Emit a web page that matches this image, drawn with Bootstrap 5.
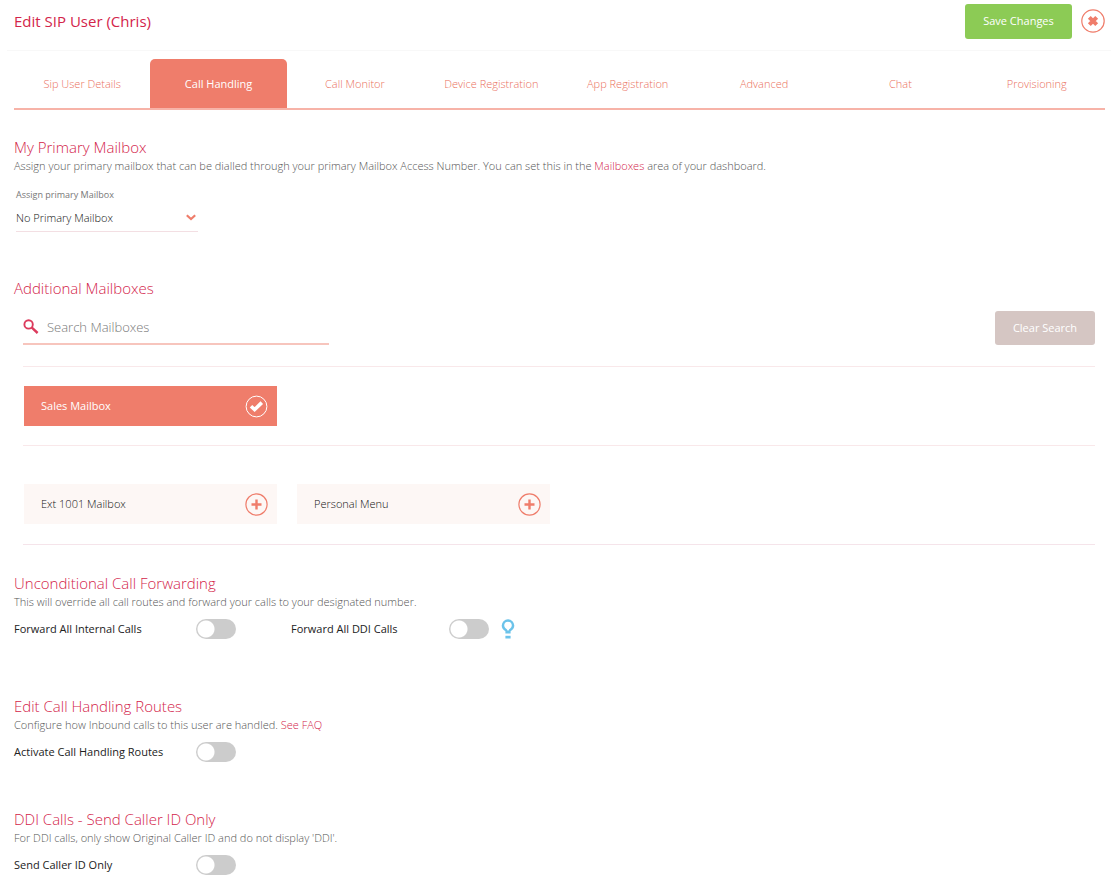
<!DOCTYPE html>
<html lang="en">
<head>
<meta charset="utf-8">
<meta name="viewport" content="width=device-width, initial-scale=1">
<title>Edit SIP User</title>
<link href="https://cdn.jsdelivr.net/npm/bootstrap@5.3.0/dist/css/bootstrap.min.css" rel="stylesheet">
<style>
  :root { --coral: #ef7d6b; --rose: #dc3a5c; }
  body { font-family: "Open Sans", "Liberation Sans", sans-serif; font-size: 11px; line-height: 18px; color: #333; background: #fff; }
  a { color: var(--rose); text-decoration: none; }
  .page-head { height: 51px; margin-left: 7px; padding: 0 6px 8px 7px; border-bottom: 1px solid #f8f8f8; }
  .page-title { font-size: 15px; line-height: 20px; font-weight: 400; color: #d3244a; }
  .head-tools { gap: 9px; }
  .btn { font-size: 11px; line-height: 18px; border: 0; border-radius: 3px; color: #fff; }
  .btn-save { width: 107px; height: 35px; background: #8ccb55; }
  .btn-clear, .btn-clear:disabled { width: 100px; height: 34px; background: #d5c6c3; color: #fff; opacity: 1; }
  .btn-round { width: 24px; height: 24px; padding: 0; background: none; }
  .btn-round svg, .box-tile svg { display: block; }
  .page-main { padding: 8px 6px 20px 14px; }
  .tab-bar { border-bottom: 2px solid #f7b3a8; margin-bottom: 27px; }
  .tab-bar .nav-link { height: 49px; padding: 16px 0; color: #ea705d; border-radius: 5px 5px 0 0; }
  .tab-bar .nav-link.active { background: var(--coral); color: #fff; font-weight: 400; }
  .sect-title { font-size: 15px; line-height: 20px; font-weight: 300; color: #d3244a; margin: 0; }
  .sect-text { color: #555; margin: 0; line-height: 18px; font-weight: 300; }
  .sect-text a { color: #d3244a; }
  .light { font-weight: 300; }
  .field-label { display: block; font-size: 9px; line-height: 14px; color: #777; }
  .primary-field { width: 182px; margin: 13px 0 46px 2px; }
  .primary-field select { width: 100%; height: 30px; padding: 2px 18px 0 0; border: 0; border-bottom: 1px solid #f3dfe3; border-radius: 0; appearance: none; background: none; color: #111; font-weight: 300; }
  .select-arrow { position: absolute; right: 2px; bottom: 11px; pointer-events: none; }
  .mail-panel { padding: 0 10px 0 9px; margin-bottom: 28px; }
  .search-row { padding-bottom: 21px; margin-top: 12px; }
  .search-box { width: 306px; height: 35px; border-bottom: 2px solid #f7c5bd; }
  .search-box input { height: 28px; border: 0; padding: 0; font-size: 13px; line-height: 24px; color: #555; background: none; }
  .search-box input::placeholder { color: #777; opacity: 1; }
  .tile-row { gap: 20px; padding: 19px 1px; border-top: 1px solid #f9e8ea; }
  .tile-row.available { padding: 38px 1px 20px; border-bottom: 1px solid #f5e4ea; }
  .box-tile { width: 253px; height: 40px; padding: 0 9px 0 17px; border: 0; background: #fdf7f5; color: #111; font-weight: 300; text-align: left; }
  .box-tile.chosen { background: var(--coral); color: #fff; font-weight: 400; }
  .switch-row { height: 20px; margin: 8px 0 57px; color: #222; }
  .switch-row label { width: 182px; }
  .switch-row.tight { margin-bottom: 47px; }
  .switch-row label.second { width: 158px; margin-left: 55px; }
  .toggle { appearance: none; width: 40px; height: 20px; margin: 0; border-radius: 10px; cursor: pointer;
    background: radial-gradient(circle at 10px 10px, #fff 8px, #ccc 9px); }
  .toggle:checked { background: radial-gradient(circle at 30px 10px, #fff 8px, #8ccb55 9px); }
</style>
</head>
<body>
<header class="page-head d-flex align-items-center justify-content-between">
  <h1 class="page-title m-0">Edit SIP User (Chris)</h1>
  <div class="head-tools d-flex align-items-center">
    <button type="button" class="btn btn-save p-0">Save Changes</button>
    <button type="button" class="btn btn-round" aria-label="Close">
      <svg width="24" height="24" viewBox="0 0 24 24" fill="none" stroke="#ef7d6b"><circle cx="12" cy="12" r="11.2" stroke-width="1.2"/><path d="M8.300 8.300l7.400 7.400M15.700 8.300l-7.400 7.400" stroke-width="4"/></svg>
    </button>
  </div>
</header>

<main class="page-main">
  <ul class="nav nav-justified tab-bar light">
    <li class="nav-item"><a class="nav-link" href="#">Sip User Details</a></li>
    <li class="nav-item"><a class="nav-link active" href="#" aria-current="page">Call Handling</a></li>
    <li class="nav-item"><a class="nav-link" href="#">Call Monitor</a></li>
    <li class="nav-item"><a class="nav-link" href="#">Device Registration</a></li>
    <li class="nav-item"><a class="nav-link" href="#">App Registration</a></li>
    <li class="nav-item"><a class="nav-link" href="#">Advanced</a></li>
    <li class="nav-item"><a class="nav-link" href="#">Chat</a></li>
    <li class="nav-item"><a class="nav-link" href="#">Provisioning</a></li>
  </ul>

  <section>
    <h2 class="sect-title">My Primary Mailbox</h2>
    <p class="sect-text">Assign your primary mailbox that can be dialled through your primary Mailbox Access Number. You can set this in the <a href="#">Mailboxes</a> area of your dashboard.</p>
    <div class="primary-field position-relative">
      <label class="field-label" for="primary">Assign primary Mailbox</label>
      <select id="primary"><option>No Primary Mailbox</option></select>
      <svg class="select-arrow" width="10" height="7" viewBox="0 0 10 7" fill="none" stroke="#ef7d6b" stroke-width="2.200"><path d="M.8 1.200L5 5l4.200-3.800"/></svg>
    </div>
  </section>

  <section>
    <h2 class="sect-title">Additional Mailboxes</h2>
    <div class="mail-panel">
      <div class="search-row d-flex align-items-end justify-content-between">
        <div class="search-box d-flex align-items-center">
          <label for="search" class="me-2" aria-label="Search Mailboxes"><svg class="d-block" width="16" height="16" viewBox="0 0 16 16" fill="none" stroke="#dc3a5c"><circle cx="5.600" cy="5.400" r="4.200" stroke-width="1.900"/><path d="M8.600 8.400l6 5.600" stroke-width="2.400"/></svg></label>
          <input id="search" class="flex-grow-1 light" type="text" placeholder="Search Mailboxes">
        </div>
        <button type="button" class="btn btn-clear p-0" disabled>Clear Search</button>
      </div>
      <div class="tile-row d-flex flex-wrap">
        <button type="button" class="box-tile chosen d-flex align-items-center justify-content-between"><span>Sales Mailbox</span>
          <svg width="23" height="23" viewBox="0 0 23 23" fill="none" stroke="#fff"><circle cx="11.500" cy="11.500" r="10.400" stroke-width="1"/><path d="M6 11.200l3.600 3.400 7.200-7" stroke-width="3.600"/></svg></button>
      </div>
      <div class="tile-row available d-flex flex-wrap">
        <button type="button" class="box-tile d-flex align-items-center justify-content-between"><span>Ext 1001 Mailbox</span>
          <svg width="23" height="23" viewBox="0 0 23 23" fill="none" stroke="#ef7d6b"><circle cx="11.500" cy="11.500" r="10.600" stroke-width="1.200"/><path d="M11.500 6.500v10M6.500 11.500h10" stroke-width="2.400"/></svg></button>
        <button type="button" class="box-tile d-flex align-items-center justify-content-between"><span>Personal Menu</span>
          <svg width="23" height="23" viewBox="0 0 23 23" fill="none" stroke="#ef7d6b"><circle cx="11.500" cy="11.500" r="10.600" stroke-width="1.200"/><path d="M11.500 6.500v10M6.500 11.500h10" stroke-width="2.400"/></svg></button>
      </div>
    </div>
  </section>

  <section>
    <h2 class="sect-title">Unconditional Call Forwarding</h2>
    <p class="sect-text">This will override all call routes and forward your calls to your designated number.</p>
    <div class="switch-row d-flex align-items-center">
      <label for="internal">Forward All Internal Calls</label><input id="internal" class="toggle" type="checkbox" role="switch">
      <label class="second" for="ddi">Forward All DDI Calls</label><input id="ddi" class="toggle" type="checkbox" role="switch">
      <svg class="ms-2" width="22" height="20" viewBox="0 0 22 20"><path d="M8.400 14.600v-2.400C6 11 4.700 9.100 4.700 6.600a6.300 6.300 0 0 1 12.600 0c0 2.500-1.300 4.400-3.700 5.600v2.400z" fill="#6cc3ea"/><path d="M11 2.800a3.800 3.800 0 0 0-3.800 3.800c0 2.200 2.300 3 3.800 5.400 1.500-2.400 3.800-3.200 3.800-5.400A3.800 3.800 0 0 0 11 2.800z" fill="#fff"/><path d="M8.400 16.800h5.200v2.700H8.400z" fill="#6cc3ea"/></svg>
    </div>
  </section>

  <section>
    <h2 class="sect-title">Edit Call Handling Routes</h2>
    <p class="sect-text">Configure how Inbound calls to this user are handled. <a href="#">See FAQ</a></p>
    <div class="switch-row tight d-flex align-items-center">
      <label for="routes">Activate Call Handling Routes</label><input id="routes" class="toggle" type="checkbox" role="switch">
    </div>
  </section>

  <section>
    <h2 class="sect-title">DDI Calls - Send Caller ID Only</h2>
    <p class="sect-text">For DDI calls, only show Original Caller ID and do not display 'DDI'.</p>
    <div class="switch-row d-flex align-items-center mb-0">
      <label for="callerid">Send Caller ID Only</label><input id="callerid" class="toggle" type="checkbox" role="switch">
    </div>
  </section>
</main>
<script src="https://cdn.jsdelivr.net/npm/bootstrap@5.3.0/dist/js/bootstrap.bundle.min.js"></script>
</body>
</html>
